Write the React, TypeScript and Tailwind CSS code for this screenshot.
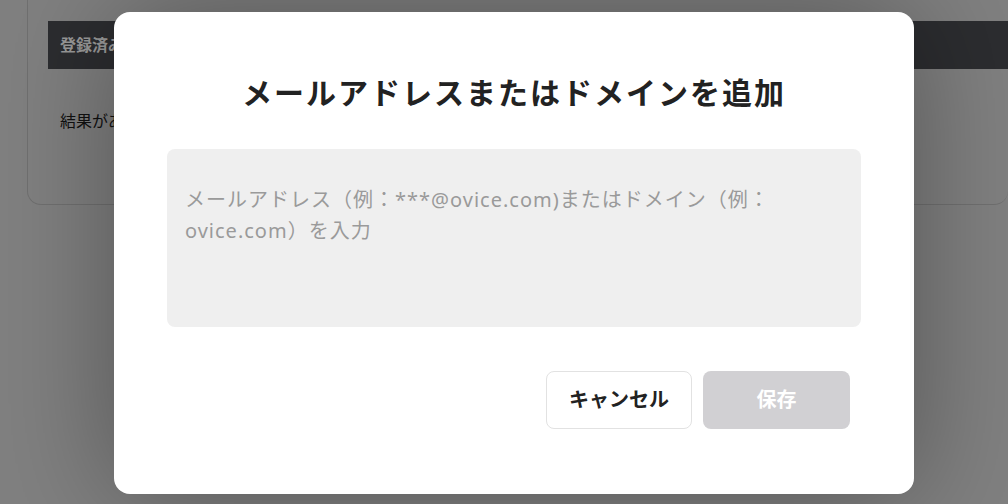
import React from "react";

export default function App() {
  const jp = "font-['Noto_Sans','Noto_Sans_CJK_JP',sans-serif]";
  return (
    <div className={`relative h-[504px] w-[1008px] overflow-hidden bg-[#808080] ${jp}`}>
      {/* background page */}
      <div className="pl-[27px] pr-0">
        <div className="-mt-[20px] h-[225px] rounded-b-[14px] border border-[#707070] border-r-0 bg-[#808080] pl-[20px] pt-[40px]">
          <div className="flex h-[48px] items-center bg-[#2c2d30] pl-[12px] text-[16px] font-bold text-[#9a9a9a]">
            登録済みのメールアドレス・ドメイン
          </div>
          <div className="pl-[12px] pt-[40px] text-[16px] text-[#111]">結果がありません</div>
        </div>
      </div>

      {/* overlay */}
      <div className="absolute inset-0 flex items-start justify-center pl-[20px] pt-[12px]">
        <div className="flex w-[800px] flex-col rounded-[16px] bg-white px-[53px] pb-[65px] pt-[61px] shadow-[0_0_120px_rgba(0,0,0,0.35)]">
          <h1 className="text-center text-[30px] font-bold leading-[40px] tracking-[2px] text-[#222]">
            メールアドレスまたはドメインを追加
          </h1>
          <div className="mt-[36px] h-[178px] rounded-[8px] bg-[#efefef] px-[18px] pt-[35px] text-[20px] leading-[31px] tracking-[1px] text-[#9a9a9a]">
            メールアドレス（例：***@ovice.com)またはドメイン（例：
            <br />
            ovice.com）を入力
          </div>
          <div className="mt-[44px] flex justify-end gap-[11px] pr-[11px]">
            <button className="h-[58px] w-[146px] rounded-[8px] border border-[#e2e2e2] bg-white text-[20px] font-bold text-[#222]">
              キャンセル
            </button>
            <button className="h-[58px] w-[147px] rounded-[8px] bg-[#d1d0d3] text-[20px] font-bold text-white">
              保存
            </button>
          </div>
        </div>
      </div>
    </div>
  );
}
